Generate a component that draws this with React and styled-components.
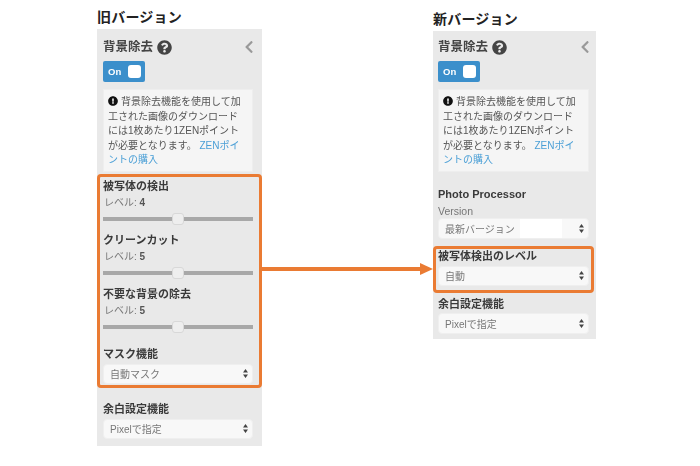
import React from "react";
import styled, { createGlobalStyle } from "styled-components";
import { FaQuestionCircle, FaChevronLeft, FaExclamationCircle } from "react-icons/fa";

const Global = createGlobalStyle`
  html, body { margin: 0; padding: 0; background: #fff; }
  body { font-family: "Liberation Sans", "Noto Sans CJK JP", sans-serif; }
`;

const Page = styled.div`
  position: relative;
  width: 700px;
  height: 466px;
  overflow: hidden;
  display: flex;
  padding-left: 97px;
  box-sizing: border-box;
`;

const Column = styled.section`
  width: ${(p) => p.$width}px;
  margin-right: ${(p) => p.$gap || 0}px;
  padding-top: ${(p) => p.$top}px;
`;

const VersionTitle = styled.h2`
  margin: 0;
  height: 22px;
  line-height: 20px;
  font-size: 14px;
  font-weight: 700;
  color: #222;
  letter-spacing: 0.2px;
`;

const Panel = styled.div`
  background: #e9e9e9;
  padding: ${(p) => p.$pt}px ${(p) => p.$pr}px ${(p) => p.$pb}px ${(p) => p.$pl}px;
  filter: blur(0.25px);
`;

const Header = styled.div`
  display: flex;
  align-items: center;
  height: 16px;
`;

const Heading = styled.h3`
  margin: 0;
  font-size: 12.5px;
  line-height: 16px;
  font-weight: 700;
  color: #444;
`;

const Help = styled(FaQuestionCircle)`
  margin-left: 4px;
  font-size: 15px;
  color: #444;
`;

const Back = styled(FaChevronLeft)`
  margin-left: auto;
  margin-right: -3px;
  font-size: 14px;
  color: #999;
`;

const Toggle = styled.div`
  margin-top: 6px;
  width: 42px;
  height: 21px;
  border-radius: 2px;
  background: #3b8fcb;
  display: flex;
  align-items: center;
  justify-content: space-between;
  padding: 0 4px 0 5px;
  box-sizing: border-box;
  color: #fff;
  font-size: 9.5px;
  font-weight: 700;
`;

const Knob = styled.span`
  width: 13px;
  height: 13px;
  border-radius: 3px;
  background: #fff;
`;

const Notice = styled.div`
  margin-top: 7px;
  background: #f5f5f5;
  border: 1px solid #eeeeee;
  padding: 5px 4px 3px;
  font-size: 10px;
  line-height: 14.5px;
  color: #555;
  white-space: nowrap;
`;

const Alert = styled(FaExclamationCircle)`
  color: #111;
  font-size: 10px;
  vertical-align: -1px;
  margin-right: 3px;
`;

const Link = styled.a`
  color: #4a9fd6;
`;

const Highlight = styled.div`
  margin: ${(p) => p.$margin};
  padding: ${(p) => p.$padding};
  border: 3px solid #ea7b33;
  border-radius: 4px;
`;

const Label = styled.div`
  margin-top: ${(p) => p.$mt || 0}px;
  height: ${(p) => p.$h || 14}px;
  line-height: ${(p) => p.$h || 14}px;
  font-size: 11px;
  font-weight: 700;
  color: #3a3a3a;
`;

const Level = styled.div`
  margin-top: 3px;
  height: 14px;
  line-height: 14px;
  font-size: 10px;
  color: #777;
  padding-left: 1px;
  b { color: #555; }
`;

const SubLabel = styled.div`
  margin-top: 3px;
  height: 14px;
  line-height: 14px;
  font-size: 10.5px;
  color: #777;
`;

const Slider = styled.div`
  position: relative;
  margin-top: 2px;
  height: 14px;
  &::before {
    content: "";
    position: absolute;
    left: 0;
    right: 0;
    top: 5px;
    height: 4px;
    background: #a8a8a8;
  }
`;

const Thumb = styled.span`
  position: absolute;
  left: 69px;
  top: 1px;
  width: 12px;
  height: 12px;
  border-radius: 3px;
  background: #eeeeee;
  border: 1px solid #d8d8d8;
  box-sizing: border-box;
`;

const Select = styled.div`
  margin-top: ${(p) => p.$mt}px;
  height: ${(p) => p.$h}px;
  display: flex;
  align-items: center;
  justify-content: space-between;
  padding: 0 4px 0 6px;
  box-sizing: border-box;
  background: #f8f8f8;
  border: 1px solid #efefef;
  border-radius: 4px;
  font-size: 10px;
  color: #777;
`;

const Patch = styled.span`
  flex: 1;
  align-self: stretch;
  margin: 0 17px 0 5px;
  background: #fff;
`;

const Arrows = () => (
  <svg width="5" height="9" viewBox="0 0 5 9">
    <path d="M2.5 0L5 3.6H0zM2.5 9L0 5.4h5z" fill="#444" />
  </svg>
);

const Connector = styled.svg`
  position: absolute;
  left: 262px;
  top: 260px;
`;

const Choice = ({ text, mt, h, patch }) => (
  <Select $mt={mt} $h={h}>
    <span>{text}</span>
    {patch && <Patch />}
    <Arrows />
  </Select>
);

const Top = () => (
  <>
    <Header>
      <Heading>背景除去</Heading>
      <Help />
      <Back />
    </Header>
    <Toggle>On<Knob /></Toggle>
    <Notice>
      <Alert />背景除去機能を使用して加<br />
      工された画像のダウンロード<br />
      には1枚あたり1ZENポイント<br />
      が必要となります。 <Link>ZENポイ<br />ントの購入</Link>
    </Notice>
  </>
);

const Tuned = ({ title, value, mt }) => (
  <>
    <Label $mt={mt}>{title}</Label>
    <Level>レベル: <b>{value}</b></Level>
    <Slider><Thumb /></Slider>
  </>
);

export default function App() {
  return (
    <Page>
      <Global />
      <Column $width={165} $gap={171} $top={7}>
        <VersionTitle>旧バージョン</VersionTitle>
        <Panel $pt={10} $pr={9} $pb={7} $pl={6}>
          <Top />
          <Highlight $margin="2px -9px 0 -6px" $padding="2px 6px 1px 3px">
            <Tuned title="被写体の検出" value="4" />
            <Tuned title="クリーンカット" value="5" mt={7} />
            <Tuned title="不要な背景の除去" value="5" mt={7} />
            <Label $mt={13}>マスク機能</Label>
            <Choice text="自動マスク" mt={3} h={20} />
          </Highlight>
          <Label $mt={14}>余白設定機能</Label>
          <Choice text="Pixelで指定" mt={3} h={20} />
        </Panel>
      </Column>
      <Column $width={163} $top={9}>
        <VersionTitle>新バージョン</VersionTitle>
        <Panel $pt={8} $pr={7} $pb={5} $pl={5}>
          <Top />
          <Label $mt={15}>Photo Processor</Label>
          <SubLabel>Version</SubLabel>
          <Choice text="最新バージョン" mt={0} h={21} patch />
          <Highlight $margin="7px -5px 0 -5px" $padding="1px 2px 4px 2px">
            <Label $h={13}>被写体検出のレベル</Label>
            <Choice text="自動" mt={3} h={20} />
          </Highlight>
          <Label $mt={4}>余白設定機能</Label>
          <Choice text="Pixelで指定" mt={2} h={21} />
        </Panel>
      </Column>
      <Connector width="172" height="18" viewBox="0 0 172 18">
        <path d="M0 7h159v4H0z" fill="#ea7b33" />
        <path d="M158 3l13 6-13 6z" fill="#ea7b33" />
      </Connector>
    </Page>
  );
}
